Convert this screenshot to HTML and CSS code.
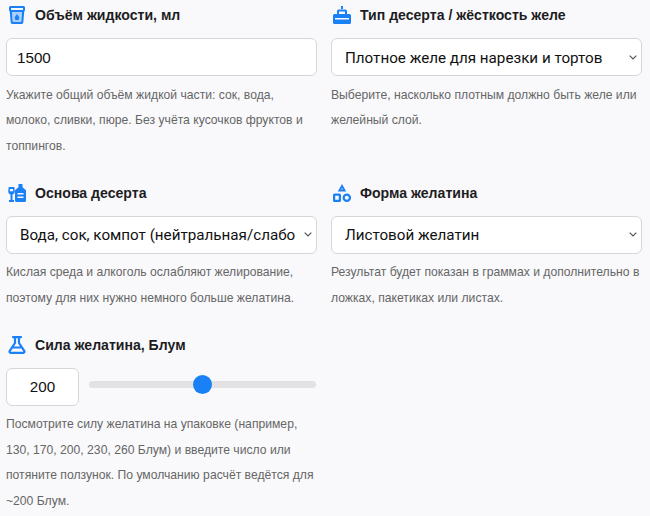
FILE: index.html
```html
<!DOCTYPE html>
<html lang="ru">
  <head>
    <meta charset="UTF-8">
    <meta name="viewport" content="width=device-width, initial-scale=1.0">
    <title>Калькулятор желатина</title>
    <link rel="stylesheet" href="styles.css">
  </head>
  <body>
    <form class="calc-form">
      <div class="field">
        <label class="field-label" for="volume">
          <svg class="field-icon" viewBox="0 0 18 18">
            <path fill="#a8cffb" d="M4 5h10l-1 11H5z"/>
            <path fill="#1a80f5" fill-rule="evenodd" d="M2.500 0h13A1.500 1.500 0 0 1 17 1.500V4a1.500 1.500 0 0 1-.7 1.300L15.300 16.600A1.500 1.500 0 0 1 13.800 18H4.200a1.500 1.500 0 0 1-1.500-1.400L1.700 5.300A1.500 1.500 0 0 1 1 4V1.500A1.500 1.500 0 0 1 2.500 0zM3 2v2h12V2zm1 4l.8 10h8.400L14 6z"/>
            <path fill="#1a80f5" d="M9 8c1.300 1.700 2.300 2.800 2.300 4a2.300 2.300 0 0 1-4.600 0c0-1.200 1-2.300 2.300-4z"/>
          </svg>
          Объём жидкости, мл
        </label>
        <input class="control" id="volume" type="text" value="1500">
        <p class="hint">Укажите общий объём жидкой части: сок, вода, молоко, сливки, пюре. Без учёта кусочков фруктов и топпингов.</p>
      </div>

      <div class="field">
        <label class="field-label" for="dessertType">
          <svg class="field-icon" viewBox="0 0 18 18">
            <path fill="#1a80f5" fill-rule="evenodd" d="M8 0h2v3H8zM5.500 3.500h7A1.500 1.500 0 0 1 14 5v3h2.500A1.500 1.500 0 0 1 18 9.500v7a1.500 1.500 0 0 1-1.500 1.500h-15A1.500 1.500 0 0 1 0 16.500v-7A1.500 1.500 0 0 1 1.500 8H4V5a1.500 1.500 0 0 1 1.500-1.500zM6 5.500V8h6V5.500zM2 12v1.500h14V12z"/>
          </svg>
          Тип десерта / жёсткость желе
        </label>
        <select class="control" id="dessertType">
          <option>Плотное желе для нарезки и тортов</option>
        </select>
        <p class="hint">Выберите, насколько плотным должно быть желе или желейный слой.</p>
      </div>

      <div class="field">
        <label class="field-label" for="base">
          <svg class="field-icon" viewBox="0 0 18 18">
            <path fill="#1a80f5" fill-rule="evenodd" d="M.7 3h5.600l.5 4.500a3 3 0 0 1-2.300 3V16H6v2H1v-2h1.500v-5.500a3 3 0 0 1-2.300-3zM2 5l-.2 2.300h3.400L5 5z"/>
            <path fill="#1a80f5" fill-rule="evenodd" d="M10.500 0h4v3.200L17.700 6c.2.200.3.500.3.800v9.700a1.500 1.500 0 0 1-1.500 1.500h-8A1.500 1.500 0 0 1 7 16.500V6.800c0-.3.100-.6.300-.8l3.200-2.800zM9.500 9v1.500h6V9zm0 3.500V14h6v-1.500z"/>
          </svg>
          Основа десерта
        </label>
        <select class="control" id="base">
          <option>Вода, сок, компот (нейтральная/слабо</option>
        </select>
        <p class="hint">Кислая среда и алкоголь ослабляют желирование, поэтому для них нужно немного больше желатина.</p>
      </div>

      <div class="field">
        <label class="field-label" for="gelatinForm">
          <svg class="field-icon" viewBox="0 0 18 18">
            <path fill="#1a80f5" fill-rule="evenodd" d="M9 0l4.200 7.500H4.800zM9 3.800L8.200 5.500h1.600z"/>
            <path fill="#1a80f5" fill-rule="evenodd" d="M1.500 9.500h5A1.500 1.500 0 0 1 8 11v5.500A1.500 1.500 0 0 1 6.500 18h-5A1.500 1.500 0 0 1 0 16.500V11a1.500 1.500 0 0 1 1.500-1.500zM2.200 11.700v4.100h3.600v-4.100z"/>
            <path fill="#1a80f5" fill-rule="evenodd" d="M13.800 9.500a4.250 4.250 0 1 1 0 8.500 4.250 4.250 0 0 1 0-8.500zm0 2.200a2.050 2.050 0 1 0 0 4.100 2.050 2.050 0 0 0 0-4.100z"/>
          </svg>
          Форма желатина
        </label>
        <select class="control" id="gelatinForm">
          <option>Листовой желатин</option>
        </select>
        <p class="hint">Результат будет показан в граммах и дополнительно в ложках, пакетиках или листах.</p>
      </div>

      <div class="field">
        <label class="field-label" for="bloom">
          <svg class="field-icon" viewBox="0 0 18 18">
            <path fill="none" stroke="#1a80f5" stroke-width="2.200" stroke-linejoin="round" stroke-linecap="round" d="M5 1.100h8M7 1.100v5.900L1.600 15.200A1.200 1.200 0 0 0 2.600 16.900h12.800a1.200 1.200 0 0 0 1-1.700L11 7V1.100M4.800 11.500h8.400"/>
          </svg>
          Сила желатина, Блум
        </label>
        <div class="bloom-row">
          <input class="control bloom-input" id="bloom" type="text" value="200">
          <input class="bloom-slider" type="range" min="50" max="350" value="200" aria-label="Сила желатина">
        </div>
        <p class="hint">Посмотрите силу желатина на упаковке (например, 130, 170, 200, 230, 260 Блум) и введите число или потяните ползунок. По умолчанию расчёт ведётся для ~200 Блум.</p>
      </div>
    </form>
  </body>
</html>
```

FILE: styles.css
```css
body {
  margin: 0;
  background-color: #f9f9fb;
  color: #1d1d1f;
  font-family: "Liberation Sans", Arial, sans-serif;
}

.calc-form {
  display: grid;
  grid-template-columns: 311px 311px;
  column-gap: 14px;
  row-gap: 23.5px;
  align-items: start;
  padding: 5.3px 8px 0 6px;
}

.field-label {
  display: flex;
  align-items: center;
  gap: 9px;
  height: 20px;
  margin-bottom: 13px;
  font-size: 14.08px;
  font-weight: 700;
}

.field-icon {
  width: 18px;
  height: 18px;
  margin-left: 2px;
  flex: none;
}

.control {
  display: block;
  width: 100%;
  height: 38px;
  box-sizing: border-box;
  padding: 0 10px;
  border: 1px solid #d6d6da;
  border-radius: 6px;
  background-color: #fff;
  color: #111;
  font-family: "Liberation Sans", Arial, sans-serif;
  font-size: 15.2px;
}

select.control {
  padding: 1px 18px 0 13px;
  background-image: url("data:image/svg+xml,%3Csvg xmlns='http://www.w3.org/2000/svg' viewBox='0 0 8 5'%3E%3Cpath fill='none' stroke='%23555' stroke-width='1.200' d='M.7.7L4 4l3.300-3.300'/%3E%3C/svg%3E");
  background-repeat: no-repeat;
  background-position: right 4px center;
  background-size: 8px 5px;
  font-family: Roboto, sans-serif;
  font-size: 15.2px;
  appearance: none;
  -webkit-appearance: none;
}

.hint {
  margin: 6.5px 0 0;
  color: #666;
  font-size: 12.16px;
  line-height: 25.5px;
}

.bloom-row {
  display: flex;
  align-items: center;
  gap: 10px;
}

.bloom-input {
  width: 73px;
  flex: none;
  text-align: center;
}

.bloom-slider {
  flex: 1;
  min-width: 0;
  height: 19px;
  margin: -4px 1px 0 0;
  background: transparent;
  appearance: none;
  -webkit-appearance: none;
}

.bloom-slider::-webkit-slider-runnable-track {
  height: 7px;
  border-radius: 4px;
  background-color: #e2e2e4;
}

.bloom-slider::-webkit-slider-thumb {
  width: 19px;
  height: 19px;
  margin-top: -6px;
  border-radius: 50%;
  background-color: #1a80f5;
  appearance: none;
  -webkit-appearance: none;
}
```
